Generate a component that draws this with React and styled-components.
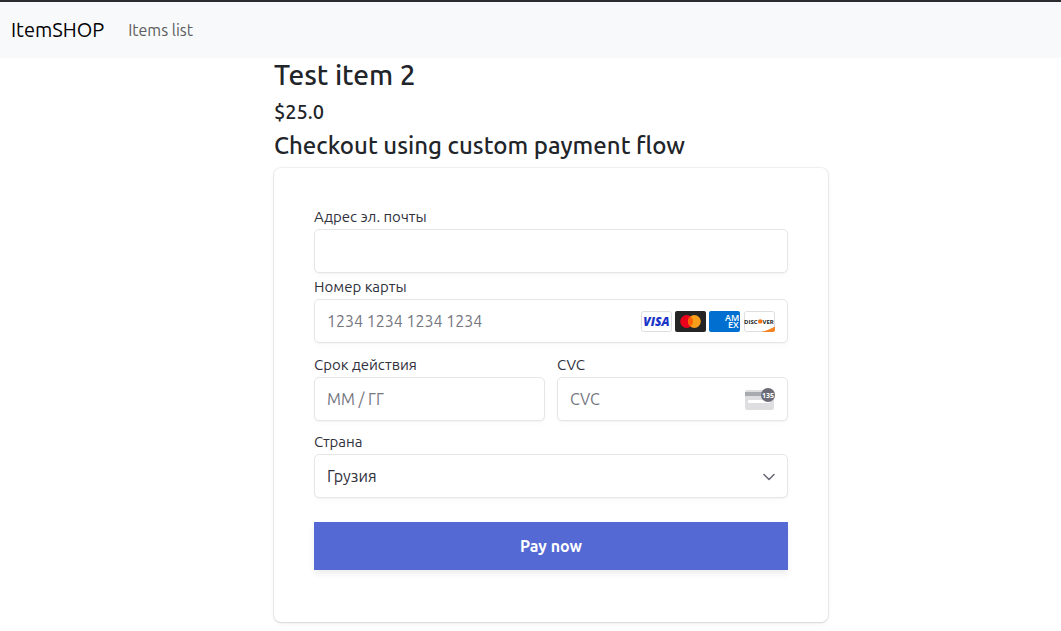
import React from "react";
import styled, { createGlobalStyle } from "styled-components";

const GlobalStyle = createGlobalStyle`
  *, *::before, *::after { box-sizing: border-box; }
  body {
    margin: 0;
    background: #fff;
    color: #212529;
    font-family: Ubuntu, "Noto Sans", "Open Sans", sans-serif;
    font-size: 16px;
  }
`;

const Navbar = styled.nav`
  display: flex;
  align-items: center;
  gap: 24px;
  min-height: 58px;
  padding: 0 11px;
  border-top: 2px solid #2c2c31;
  background: #f8f9fb;
`;

const Brand = styled.a`
  color: #000;
  font-size: 20px;
  line-height: 30px;
  text-decoration: none;
`;

const NavLink = styled.a`
  color: #5c5d5e;
  font-size: 16px;
  line-height: 24px;
  text-decoration: none;
`;

const Page = styled.main`
  display: grid;
  grid-template-columns: 274fr minmax(0, 554px) 233fr;
  padding-bottom: 8px;
`;

const Checkout = styled.section`
  grid-column: 2;
  display: flex;
  flex-direction: column;
  gap: 8px;
`;

const Title = styled.h1`
  margin: 0;
  font-size: 28px;
  line-height: 34px;
  font-weight: 500;
`;

const Price = styled.p`
  margin: 0;
  font-size: 20px;
  line-height: 24px;
  font-weight: 500;
`;

const Subtitle = styled.h2`
  margin: 0;
  font-size: 24px;
  line-height: 28px;
  font-weight: 500;
`;

const Form = styled.form`
  display: flex;
  flex-direction: column;
  padding: 40px 40px 52px;
  border-radius: 7px;
  box-shadow: 0 0 0 1px rgba(50, 50, 93, 0.07), 0 2px 5px rgba(50, 50, 93, 0.06),
    0 1px 2px rgba(0, 0, 0, 0.07);
`;

const Fields = styled.div`
  display: flex;
  flex-direction: column;
  gap: 12px;
  margin-bottom: 24px;
`;

const FieldGroup = styled.div`
  display: flex;
  flex-direction: column;
  gap: 5px;
  padding-bottom: 1px;
`;

const Columns = styled.div`
  display: grid;
  grid-template-columns: 1fr 1fr;
  gap: 12px;
`;

const FieldBox = styled.div`
  display: flex;
  flex-direction: column;
  gap: 3px;
`;

const Label = styled.label`
  color: #30313d;
  font-size: 15px;
  line-height: 18px;
`;

const Control = styled.div`
  position: relative;
`;

const Input = styled.input`
  display: block;
  width: 100%;
  height: 44px;
  padding: 0 12px;
  border: 1px solid #e6e6e6;
  border-radius: 5px;
  background: #fff;
  box-shadow: 0 1px 1px rgba(0, 0, 0, 0.03), 0 3px 6px rgba(0, 0, 0, 0.02);
  color: #30313d;
  font: inherit;
  appearance: none;

  &::placeholder {
    color: #757680;
    opacity: 1;
  }
`;

const Adornment = styled.span`
  position: absolute;
  top: 0;
  bottom: 0;
  right: 13px;
  display: flex;
  align-items: center;
  gap: 3px;
  pointer-events: none;
`;

const PayButton = styled.button`
  height: 48px;
  border: 0;
  background: #5469d4;
  box-shadow: 0 4px 6px rgba(0, 0, 0, 0.07);
  color: #fff;
  font: inherit;
  font-weight: 600;
  cursor: pointer;
`;

const CardText = styled.text`
  font-family: "Open Sans", sans-serif;
  font-style: ${(p) => (p.$italic ? "italic" : "normal")};
  font-weight: ${(p) => p.$weight || 700};
`;

function Visa() {
  return (
    <svg width="31" height="21" viewBox="0 0 31 21" role="img" aria-label="Visa">
      <rect x=".5" y=".5" width="30" height="20" rx="2" fill="#fff" stroke="#dedee2" />
      <CardText x="15.5" y="14.8" textAnchor="middle" fontSize="12" $italic $weight={800} fill="#1a34c8">VISA</CardText>
    </svg>
  );
}

function Mastercard() {
  return (
    <svg width="31" height="21" viewBox="0 0 31 21" role="img" aria-label="Mastercard">
      <rect width="31" height="21" rx="2" fill="#252525" />
      <circle cx="11.6" cy="10.5" r="6.4" fill="#eb001b" />
      <circle cx="19.4" cy="10.5" r="6.4" fill="#f79e1b" />
      <path d="M15.5 5.4a6.4 6.4 0 0 1 0 10.2 6.4 6.4 0 0 1 0-10.2z" fill="#ff5f00" />
    </svg>
  );
}

function Amex() {
  return (
    <svg width="31" height="21" viewBox="0 0 31 21" role="img" aria-label="American Express">
      <rect width="31" height="21" rx="2" fill="#016fd0" />
      <CardText fontSize="9" $weight={600} fill="#fff">
        <tspan x="16" y="9.6">AM</tspan>
        <tspan x="19" y="17.4">EX</tspan>
      </CardText>
    </svg>
  );
}

function Discover() {
  return (
    <svg width="32" height="21" viewBox="0 0 32 21" role="img" aria-label="Discover">
      <rect x="1.5" y=".5" width="30" height="20" rx="2" fill="#fff" stroke="#dedee2" />
      <path d="M18 21c5-1.2 10-3 14-5.4V19a2 2 0 0 1-2 2z" fill="#f58220" />
      <CardText x="1" y="12.5" fontSize="6" fill="#252525">DISC</CardText>
      <circle cx="17.2" cy="10.4" r="2.2" fill="#f47216" />
      <CardText x="19.5" y="12.5" fontSize="6" fill="#252525">VER</CardText>
    </svg>
  );
}

function CvcCard() {
  return (
    <svg width="30" height="24" viewBox="0 0 30 24" aria-hidden="true">
      <rect y="3" width="29" height="20" rx="2" fill="#dedee1" />
      <rect y="5" width="29" height="4" fill="#a9aab0" />
      <rect x="3" y="13" width="22" height="3" rx="1" fill="#fff" />
      <circle cx="23" cy="8" r="7" fill="#6a6b76" />
      <CardText x="23" y="10.8" textAnchor="middle" fontSize="7" fill="#fff">135</CardText>
    </svg>
  );
}

function Chevron() {
  return (
    <svg width="12" height="10" viewBox="0 0 12 10" aria-hidden="true">
      <path d="M1 3.5 6 8.5l5-5" fill="none" stroke="#6a6b76" strokeWidth="1.6" strokeLinecap="round" strokeLinejoin="round" />
    </svg>
  );
}

function Field({ id, label, adornment, children, ...rest }) {
  return (
    <FieldBox>
      <Label htmlFor={id}>{label}</Label>
      <Control>
        {children ? (
          <Input as="select" id={id} {...rest}>{children}</Input>
        ) : (
          <Input id={id} {...rest} />
        )}
        {adornment && <Adornment>{adornment}</Adornment>}
      </Control>
    </FieldBox>
  );
}

export default function App() {
  return (
    <>
      <GlobalStyle />
      <Navbar>
        <Brand href="#">ItemSHOP</Brand>
        <NavLink href="#items">Items list</NavLink>
      </Navbar>
      <Page>
        <Checkout>
          <Title>Test item 2</Title>
          <Price>$25.0</Price>
          <Subtitle>Checkout using custom payment flow</Subtitle>
          <Form onSubmit={(e) => e.preventDefault()}>
            <Fields>
              <FieldGroup>
                <Field id="email" type="email" label="Адрес эл. почты" />
                <Field
                  id="card"
                  label="Номер карты"
                  placeholder="1234 1234 1234 1234"
                  adornment={<><Visa /><Mastercard /><Amex /><Discover /></>}
                />
              </FieldGroup>
              <Columns>
                <Field id="expiry" label="Срок действия" placeholder="ММ / ГГ" />
                <Field id="cvc" label="CVC" placeholder="CVC" adornment={<CvcCard />} />
              </Columns>
              <Field id="country" label="Страна" adornment={<Chevron />} defaultValue="GE">
                <option value="GE">Грузия</option>
              </Field>
            </Fields>
            <PayButton type="submit">Pay now</PayButton>
          </Form>
        </Checkout>
      </Page>
    </>
  );
}
